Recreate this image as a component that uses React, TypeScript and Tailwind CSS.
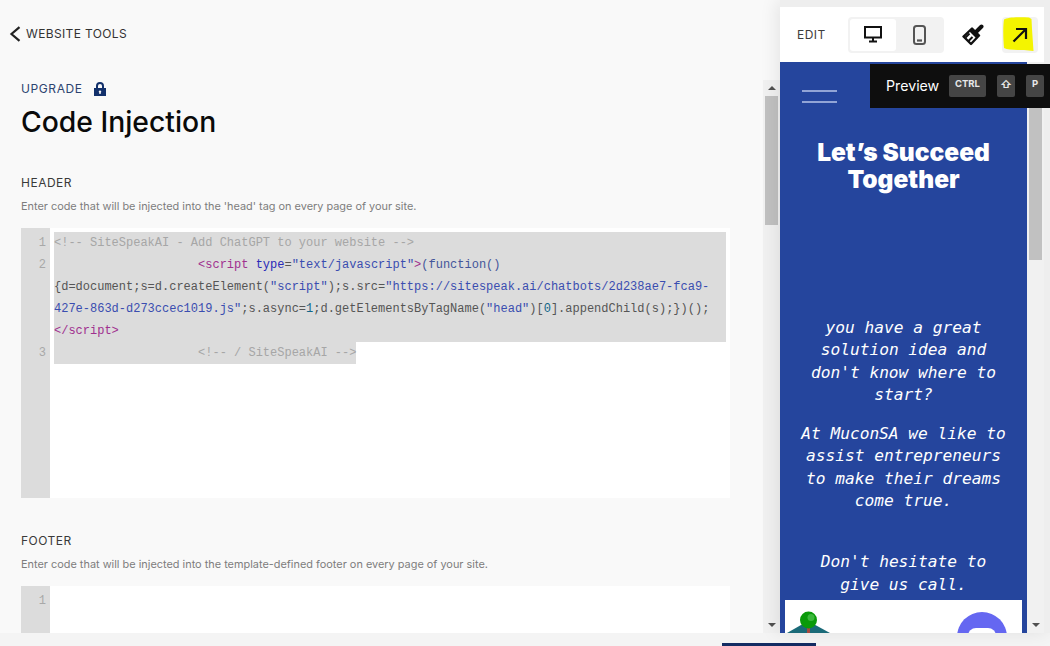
import React from "react";

const ui = "font-['Inter','Liberation_Sans',sans-serif]";
const spaces = "                    ";

const Tag = ({ children }: { children: React.ReactNode }) => <span className="text-[#a0308f]">{children}</span>;
const Attr = ({ children }: { children: React.ReactNode }) => <span className="text-[#2a2ab8]">{children}</span>;
const Str = ({ children }: { children: React.ReactNode }) => <span className="text-[#3a4db0]">{children}</span>;
const Num = ({ children }: { children: React.ReactNode }) => <span className="text-[#116688]">{children}</span>;

function Gutter({ lines }: { lines: [string, string][] }) {
  return (
    <div className="w-[29px] shrink-0 bg-[#dcdcdc] pt-[4px] text-right">
      {lines.map(([n, cls]) => (
        <div key={n} className={`pr-[4px] text-[#a8a8a8] ${cls}`}>
          {n}
        </div>
      ))}
    </div>
  );
}

function Scrollbar({ thumb, hideUp }: { thumb: string; hideUp?: boolean }) {
  return (
    <div className="relative flex h-full w-[17px] flex-col items-center bg-[#f1f1f1]">
      <div className="flex h-[16px] w-full shrink-0 items-center justify-center">
        {!hideUp && <div className="h-0 w-0 border-x-[4px] border-b-[4px] border-x-transparent border-b-[#505050]" />}
      </div>
      <div className={`w-[13px] shrink-0 bg-[#c1c1c1] ${thumb}`} />
      <div className="flex-1" />
      <div className="flex h-[16px] w-full shrink-0 items-center justify-center">
        <div className="h-0 w-0 border-x-[4px] border-t-[4px] border-x-transparent border-t-[#505050]" />
      </div>
    </div>
  );
}

function Left() {
  return (
    <div className={`flex w-[780px] shrink-0 bg-[#f9f9f9] ${ui}`}>
      <div className="w-[763px] shrink-0 overflow-hidden">
        <div className="mt-[24px] flex h-[20px] items-center pl-[9px] text-[12px] tracking-[0.36px] text-[#333]">
          <svg width="12" height="16" viewBox="0 0 12 16" fill="none" stroke="#222" strokeWidth="2.2" className="mr-[5px]">
            <path d="M10.5 1.2 2.5 8l8 6.8" />
          </svg>
          WEBSITE TOOLS
        </div>
        <div className="ml-[21px] mt-[37px] flex h-[16px] items-center text-[12px] tracking-[0.6px] text-[#2d4370]">
          UPGRADE
          <svg width="12" height="14" viewBox="0 0 12 14" className="ml-[11px]">
            <path
              fill="#12306b"
              fillRule="evenodd"
              d="M2 6V4a4 4 0 0 1 8 0v2h2v8H0V6h2Zm2 0h4V4a2 2 0 0 0-4 0v2Zm2 2.5a1.2 1.2 0 0 0-.7 2.2V12h1.4v-1.3A1.2 1.2 0 0 0 6 8.5Z"
            />
          </svg>
        </div>
        <div className="ml-[21px] mt-[7px] h-[36px] text-[28.3px] font-medium leading-[36px] text-[#0a0a0a]">Code Injection</div>
        <div className="ml-[21px] mt-[35px] h-[16px] text-[12px] leading-[16px] tracking-[0.5px] text-[#3a3a3a]">HEADER</div>
        <div className="ml-[21px] mt-[7px] h-[16px] text-[10.9px] leading-[16px] text-[#7d7d7d]">
          Enter code that will be injected into the 'head' tag on every page of your site.
        </div>
        <div className="ml-[21px] mt-[14px] flex h-[270px] w-[709px] bg-white font-['Liberation_Mono',monospace] text-[12px] leading-[22px]">
          <Gutter
            lines={[
              ["1", "h-[22px]"],
              ["2", "h-[88px]"],
              ["3", "h-[22px]"],
            ]}
          />
          <div className="ml-[4px] w-[672px] whitespace-pre pt-[4px] text-[#555]">
            <div className="bg-[#dcdcdc] text-[#a6a6a6]">{"<!-- SiteSpeakAI - Add ChatGPT to your website -->"}</div>
            <div className="bg-[#dcdcdc]">
              <div>
                {spaces}
                <Tag>{"<script"}</Tag> <Attr>type</Attr>=<Str>"text/javascript"</Str>
                <Tag>{">"}</Tag>
                <span className="text-[#44559a]">(function()</span>
              </div>
              <div>
                {"{d=document;s=d.createElement("}
                <Str>"script"</Str>
                {");s.src="}
                <Str>"https://sitespeak.ai/chatbots/2d238ae7-fca9-</Str>
              </div>
              <div>
                <Str>427e-863d-d273ccec1019.js"</Str>
                {";s.async="}
                <Num>1</Num>
                {";d.getElementsByTagName("}
                <Str>"head"</Str>
                {")["}
                <Num>0</Num>
                {"].appendChild(s);})();"}
              </div>
              <div>
                <Tag>{"</script>"}</Tag>
              </div>
            </div>
            <div className="w-[302px] bg-[#dcdcdc] text-[#a6a6a6]">{spaces + "<!-- / SiteSpeakAI -->"}</div>
          </div>
        </div>
        <div className="ml-[21px] mt-[35px] h-[16px] text-[12px] leading-[16px] tracking-[0.5px] text-[#3a3a3a]">FOOTER</div>
        <div className="ml-[21px] mt-[7px] h-[16px] text-[10.92px] leading-[16px] text-[#7d7d7d]">
          Enter code that will be injected into the template-defined footer on every page of your site.
        </div>
        <div className="ml-[21px] mt-[14px] flex h-[47px] w-[709px] bg-white font-['Liberation_Mono',monospace] text-[12px] leading-[22px]">
          <Gutter lines={[["1", "h-[22px]"]]} />
        </div>
      </div>
      <div className="mt-[80px] h-[553px] w-[17px]">
        <Scrollbar thumb="h-[129px]" />
      </div>
    </div>
  );
}

function TopBar() {
  return (
    <div className={`flex h-[55px] w-[264px] items-center bg-white pl-[17px] ${ui}`}>
      <span className="w-[31px] text-[12px] tracking-[0.5px] text-[#3c3c3c]">EDIT</span>
      <div className="ml-[20px] flex h-[36px] w-[96px] items-center rounded-[4px] bg-[#f2f2f2] p-[2px]">
        <div className="flex h-[32px] w-[46px] items-center justify-center rounded-[3px] bg-white">
          <svg width="18" height="17" viewBox="0 0 18 17" fill="none">
            <rect x="1" y="1" width="16" height="10.5" stroke="#111" strokeWidth="2" />
            <path d="M9 12v3M5 15.5h8" stroke="#111" strokeWidth="2" />
          </svg>
        </div>
        <div className="flex h-[32px] w-[46px] items-center justify-center">
          <svg width="13" height="20" viewBox="0 0 13 20" fill="none">
            <rect x="1" y="1" width="11" height="18" rx="2.5" stroke="#555" strokeWidth="2" />
            <path d="M4 15.5h5" stroke="#555" strokeWidth="2.2" />
          </svg>
        </div>
      </div>
      <div className="ml-[18px] flex w-[22px] justify-center">
        <svg width="22" height="22" viewBox="0 0 22 22" fill="none">
          <path d="M14 8 19.5 2.5" stroke="#111" strokeWidth="4" strokeLinecap="round" />
          <path d="M10 4.5 17 11.5 9 20 1.5 12.5Z" fill="#fff" stroke="#111" strokeWidth="2.4" strokeLinejoin="round" />
          <path d="M9.5 4.5 17 12l-2.5 2.5L7 7Z" fill="#111" />
          <path d="M6.5 17 10.5 13M3.5 13.5 7.5 9.5" stroke="#111" strokeWidth="2" />
        </svg>
      </div>
      <div className="relative ml-[18px] h-[36px] w-[36px] rounded-[4px] bg-[#f2f2f2]">
        <svg width="36" height="36" viewBox="0 0 36 36" className="absolute left-0 top-0">
          <path d="M2 2.5C6 0 18 0 27 0.5L29.5 2 30 12 31.5 34 22 33C14 33 6 33 2 31 1 20 1 8 2 2.5Z" fill="#f4f400" />
          <path d="M11.5 24.5 23.5 12.5M14 12H24v10" fill="none" stroke="#111" strokeWidth="2.2" />
        </svg>
      </div>
    </div>
  );
}

function Preview() {
  return (
    <div className="h-full w-[247px] overflow-hidden bg-[#25459d] text-center text-white">
      <div className="ml-[22px] mt-[28px] w-[35px]">
        <div className="h-[2px] bg-[#92a4d6]" />
        <div className="mt-[9px] h-[2px] bg-[#92a4d6]" />
      </div>
      <h1 className="mt-[36px] font-['Inter',sans-serif] text-[24.5px] font-black leading-[27px]">
        Let’s Succeed
        <br />
        Together
      </h1>
      <div className="mt-[124px] font-['DejaVu_Sans_Mono',monospace] text-[16.2px] italic leading-[22.3px]">
        <p>
          you have a great
          <br />
          solution idea and
          <br />
          don't know where to
          <br />
          start?
        </p>
        <p className="mt-[17px]">
          At MuconSA we like to
          <br />
          assist entrepreneurs
          <br />
          to make their dreams
          <br />
          come true.
        </p>
        <p className="mt-[39px]">
          Don't hesitate to
          <br />
          give us call.
        </p>
      </div>
      <div className="relative mx-[5px] mt-[4px] h-[60px] bg-white">
        <svg width="50" height="34" viewBox="0 0 50 34" className="absolute left-0 top-0">
          <path d="M2 33 23 21 45 33Z" fill="#1a6a78" />
          <rect x="22" y="24" width="3" height="9" fill="#a8483f" />
          <circle cx="23.5" cy="20" r="8.5" fill="#0a9a0a" />
          <circle cx="26" cy="17.5" r="3.5" fill="#3cb83c" />
        </svg>
        <div className="absolute left-[172px] top-[12px] h-[50px] w-[50px] rounded-full bg-[#6567f1]">
          <div className="mx-auto mt-[16px] h-[20px] w-[28px] rounded-[8px] bg-white" />
        </div>
      </div>
    </div>
  );
}

function Right() {
  return (
    <div className="relative z-10 flex w-[270px] shrink-0 flex-col bg-[#eeeeee] pt-[7px] shadow-[-4px_0_16px_rgba(0,0,0,0.08)]">
      <TopBar />
      <div className="flex min-h-0 flex-1">
        <Preview />
        <Scrollbar thumb="h-[182px]" hideUp />
      </div>
    </div>
  );
}

const Key = ({ children, cls }: { children: React.ReactNode; cls: string }) => (
  <div className={`flex h-[22px] items-center justify-center rounded-[2px] bg-[#454545] pb-[3px] font-bold text-[#e8e8e8] ${cls}`}>
    {children}
  </div>
);

export default function App() {
  return (
    <div className="relative flex h-[646px] w-[1050px] flex-col overflow-hidden bg-[#f9f9f9]">
      <div className="flex h-[633px] shrink-0">
        <Left />
        <Right />
      </div>
      <div className="h-[13px] bg-[#f4f4f4] pl-[722px] pt-[10px]">
        <div className="h-[3px] w-[94px] bg-[#142c63]" />
      </div>
      <div className={`absolute left-[870px] top-[64px] z-20 flex h-[44px] w-[180px] items-center bg-[#0e0e0e] pl-[16px] text-white ${ui}`}>
        <span className="w-[63px] text-[14.2px]">Preview</span>
        <Key cls="w-[37px] text-[9.5px]">CTRL</Key>
        <Key cls="ml-[11px] w-[18px] text-[11px]">⇧</Key>
        <Key cls="ml-[11px] w-[18px] text-[9.5px]">P</Key>
      </div>
    </div>
  );
}
